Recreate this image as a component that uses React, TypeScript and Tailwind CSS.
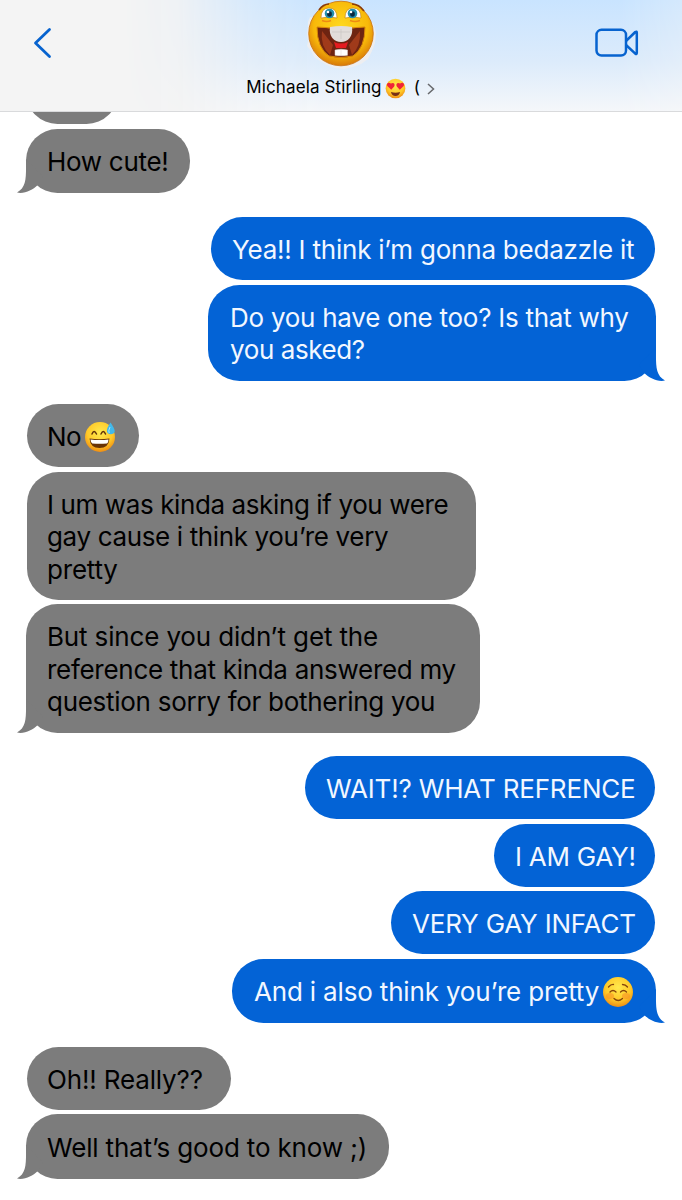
import type { ReactNode } from 'react'

type EmojiKind = 'sweat' | 'hearts' | 'relaxed'

interface Line {
  text: string
  spacing?: string
  emoji?: EmojiKind
}

interface Message {
  from: 'them' | 'me'
  box: string
  lines: Line[]
  tail?: boolean
}

const messages: Message[] = [
  { from: 'them', box: 'w-[164px] h-16 mt-[5px]', tail: true, lines: [{ text: 'How cute!', spacing: 'tracking-[-0.3px]' }] },
  { from: 'me', box: 'w-[444px] h-[63px] mt-6', lines: [{ text: 'Yea!! I think i’m gonna bedazzle it', spacing: 'tracking-[-0.22px]' }] },
  {
    from: 'me', box: 'w-[448px] h-24 mt-[5px]', tail: true,
    lines: [
      { text: 'Do you have one too? Is that why', spacing: 'tracking-[-0.26px]' },
      { text: 'you asked?', spacing: 'tracking-[-0.4px]' },
    ],
  },
  { from: 'them', box: 'w-[112px] h-[63px] mt-[23px]', lines: [{ text: 'No', spacing: 'tracking-[-0.5px]', emoji: 'sweat' }] },
  {
    from: 'them', box: 'w-[449px] h-32 mt-[5px]',
    lines: [
      { text: 'I um was kinda asking if you were', spacing: 'tracking-[-0.39px]' },
      { text: 'gay cause i think you’re very', spacing: 'tracking-[-0.36px]' },
      { text: 'pretty', spacing: 'tracking-[-0.2px]' },
    ],
  },
  {
    from: 'them', box: 'w-[454px] h-[129px] mt-1', tail: true,
    lines: [
      { text: 'But since you didn’t get the', spacing: 'tracking-[-0.15px]' },
      { text: 'reference that kinda answered my', spacing: 'tracking-[-0.29px]' },
      { text: 'question sorry for bothering you', spacing: 'tracking-[-0.28px]' },
    ],
  },
  { from: 'me', box: 'w-[350px] h-[63px] mt-[23px]', lines: [{ text: 'WAIT!? WHAT REFRENCE', spacing: 'tracking-[-0.17px]' }] },
  { from: 'me', box: 'w-[161px] h-[63px] mt-[5px]', lines: [{ text: 'I AM GAY!', spacing: 'tracking-[-0.25px]' }] },
  { from: 'me', box: 'w-[264px] h-[63px] mt-1', lines: [{ text: 'VERY GAY INFACT', spacing: 'tracking-[-0.2px]' }] },
  {
    from: 'me', box: 'w-[424px] h-16 mt-[5px]', tail: true,
    lines: [{ text: 'And i also think you’re pretty', spacing: 'tracking-[-0.17px]', emoji: 'relaxed' }],
  },
  { from: 'them', box: 'w-[204px] h-[63px] mt-6', lines: [{ text: 'Oh!! Really??', spacing: 'tracking-[-0.15px]' }] },
  { from: 'them', box: 'w-[363px] h-[65px] mt-1', tail: true, lines: [{ text: 'Well that’s good to know ;)', spacing: 'tracking-[-0.16px]' }] },
]

export default function App() {
  return (
    <div className="flex h-[1200px] w-[682px] flex-col overflow-hidden bg-white font-['Inter','Liberation_Sans',sans-serif]">
      <Header />
      <main className="flex flex-col">
        <div className="ml-[26px] h-3 w-[92px] overflow-hidden">
          <div className="-mt-[51px] h-[63px] rounded-full bg-[#7c7c7c]" />
        </div>
        {messages.map((m, i) => <Bubble key={i} message={m} />)}
      </main>
    </div>
  )
}

function Header() {
  return (
    <header className="relative h-28 shrink-0 border-b border-[#d9dadc] bg-[#f4f4f4]">
      <div className="absolute inset-0 bg-linear-to-b from-[#c9e4ff] via-[#dcebfb] via-55% to-[#f5f7fa] mask-[linear-gradient(to_right,transparent_18%,rgba(0,0,0,0.12)_26%,rgba(0,0,0,0.7)_37%,black_48%,black_91%,rgba(0,0,0,0.75)_100%)]" />
      <div className="relative flex h-full justify-between">
        <svg className="mt-[27px] ml-[33px] h-8 w-5" viewBox="0 0 20 32" fill="none" stroke="#0763cf" strokeWidth="2.8" strokeLinecap="round" strokeLinejoin="round">
          <path d="M16.5 2.5 2.5 16 16.5 29.5" />
        </svg>
        <div className="ml-[33px] flex flex-col items-center">
          <Avatar />
          <div className="mt-[6px] flex h-6 items-center text-[17px] whitespace-nowrap text-black">
            <span className="tracking-[0.14px]">Michaela Stirling</span>
            <Emoji kind="hearts" className="ml-[3px] size-[21px]" />
            <span className="ml-2">(</span>
            <svg className="mt-0.5 ml-[7px] h-3 w-2" viewBox="0 0 8 12" fill="none" stroke="#67696c" strokeWidth="1.5">
              <path d="m1 1 5.5 5L1 11" />
            </svg>
          </div>
        </div>
        <svg className="mt-[27px] mr-[43px] h-8 w-11" viewBox="0 0 44 32" fill="none" stroke="#0763cf" strokeWidth="2.5" strokeLinejoin="round">
          <rect x="1.5" y="2.8" width="29.5" height="25.8" rx="5" />
          <path d="m31 14 9.3-9q1.5-1 1.5.8v20q0 1.8-1.5.8L31 18" />
        </svg>
      </div>
    </header>
  )
}

function Bubble({ message }: { message: Message }) {
  const mine = message.from === 'me'
  const side = mine
    ? `self-end bg-[#0363d6] text-[#f2f7ff] ${message.tail ? 'mr-[26px] pl-[22px]' : 'mr-[27px] pl-[21px]'}`
    : `bg-[#7c7c7c] text-black ${message.tail ? 'ml-[26px] pl-[21px]' : 'ml-[27px] pl-5'}`

  return (
    <div className={`relative flex shrink-0 flex-col justify-center rounded-[31.5px] pt-[2.5px] ${side} ${message.box}`}>
      {message.lines.map(line => (
        <div key={line.text} className="flex h-[32.4px] items-center text-[26px] leading-[32px] whitespace-nowrap">
          <span className={line.spacing}>{line.text}</span>
          {line.emoji && <Emoji kind={line.emoji} className="ml-[3px] size-8" />}
        </div>
      ))}
      {message.tail && <Tail mine={mine} />}
    </div>
  )
}

function Tail({ mine }: { mine: boolean }) {
  return (
    <svg
      className={`absolute bottom-0 h-9 w-[30px] ${mine ? '-right-[9px] -scale-x-100 text-[#0363d6]' : '-left-[9px] text-[#7c7c7c]'}`}
      viewBox="0 0 30 36"
      fill="currentColor"
    >
      <path d="M9 2C9 20 10 30 0 35.6 8 37 15.500 33 20.500 28.300L26 20Z" />
    </svg>
  )
}

function Emoji({ kind, className }: { kind: EmojiKind; className: string }) {
  const faces: Record<EmojiKind, ReactNode> = {
    sweat: (
      <>
        <path d="M8 13q2-5 4.500 0M17 13q2.300-5 4.500 0" fill="none" stroke="#623209" strokeWidth="1.500" strokeLinecap="round" />
        <path d="M5.500 17.500q9.500 1.600 20 0-.8 9.500-10 9.500t-10-9.500Z" fill="#693406" />
        <path d="M6.500 18.400q9 1.400 18 0-.4 3.800-1.800 4-7.200.8-14.400 0-1.500-.5-1.800-4Z" fill="#fff" />
        <path d="M26.500 1.500q-4.200 6-3.500 9c.5 3.800 7.500 3.600 7.700-.3q0-2.600-4.200-8.700Z" fill="#42b9eb" />
        <path d="M26 6q-2 4-.8 6" fill="none" stroke="#a9e8ff" />
      </>
    ),
    hearts: (
      <>
        <path d="M9.500 18 3.500 12C1.500 8 5.500 5.500 9 8.500c4-2.500 7 .5 5 4.500ZM22.500 18l6-6c2-4-2-6.500-5.500-3.500-4-2.500-7 .5-5 4.500Z" fill="#f02438" />
        <path d="M9 21.500q7 2 14 0-1.500 6-7 6t-7-6Z" fill="#783015" />
      </>
    ),
    relaxed: (
      <>
        <ellipse cx="8" cy="20" rx="4" ry="3" fill="#f78a25" opacity=".5" />
        <ellipse cx="24" cy="20" rx="4" ry="3" fill="#f78a25" opacity=".5" />
        <path d="M6.500 11q2.500-2.800 5-2.500M20.500 8.500q3 0 5 2.500M8 16q3-3 6 0M18.500 16q3-3 6 0M12 22.500q4.200 4 8.500 0" fill="none" stroke="#86450b" strokeWidth="1.300" strokeLinecap="round" />
      </>
    ),
  }
  return (
    <svg className={`shrink-0 ${className}`} viewBox="0 0 32 32">
      <defs>
        <radialGradient id={`face-${kind}`} cx=".5" cy=".35" r=".65">
          <stop offset="0" stopColor="#ffe94e" />
          <stop offset=".65" stopColor="#ffc928" />
          <stop offset="1" stopColor="#ee8d13" />
        </radialGradient>
      </defs>
      <circle cx="16" cy="16" r="15" fill={`url(#face-${kind})`} />
      {faces[kind]}
    </svg>
  )
}

function Avatar() {
  return (
    <svg className="h-[70px] w-[72px]" viewBox="0 0 72 70">
      <defs>
        <radialGradient id="avatar" cx=".5" cy=".4" r=".6">
          <stop offset="0" stopColor="#ffd91e" />
          <stop offset=".7" stopColor="#f8b90a" />
          <stop offset="1" stopColor="#d87908" />
        </radialGradient>
      </defs>
      <path d="m5 17-2 5 0 5-1 7 1 7-1 5 4 5 3 6 6 4 7 4 8 3 9 1 9-2 8-3 7-5 4-8 3-8 1-10-3-10Z" fill="#f0eeee" opacity=".9" />
      <circle cx="36" cy="33.500" r="32.300" fill="url(#avatar)" stroke="#c96e0b" strokeWidth=".8" />
      <path d="M14 10q4-6 10-6M47 4q7 0 12 7" fill="none" stroke="#8d3d06" strokeWidth="1.700" />
      <path d="M16 18Q16 8 24 8t8 10q-8-2-16 0ZM40 18q0-10 8-10t8 10q-8-2-16 0Z" fill="#fff" stroke="#b97b13" strokeWidth=".6" />
      <ellipse cx="24.500" cy="13.500" rx="4.800" ry="4.800" fill="#238eac" />
      <ellipse cx="47.500" cy="13.500" rx="4.800" ry="4.800" fill="#238eac" />
      <ellipse cx="24.500" cy="14" rx="2.400" ry="2.800" fill="#082940" />
      <ellipse cx="47.500" cy="14" rx="2.400" ry="2.800" fill="#082940" />
      <circle cx="23" cy="12" r="1.300" fill="#fff" />
      <circle cx="46" cy="12" r="1.300" fill="#fff" />
      <path d="M17 20.500q5 2 9 0M45 20.500q5 2 10 0" fill="none" stroke="#ed8b13" strokeWidth="1.500" />
      <path d="M12 27q24 3 48 0 0 21-12 29-12 3-24 0Q12 48 12 27Z" fill="#6e2411" stroke="#d98708" strokeWidth="1" />
      <path d="m17 31 11 14-3 10Q15 46 17 31ZM55 31 44 45l3 10q9-9 8-24Z" fill="#a03a1a" />
      <path d="M29 42q7 3 14 0l-2 6H31Z" fill="#e51c20" />
      <path d="M25 27q11-2 22 0c1.500 9-4 15-11 15s-12.500-6-11-15Z" fill="#e2ddda" />
      <path d="M36 29v10M27 32h18" stroke="#c9c4c2" strokeWidth=".7" />
      <path d="M30 50q6-1.500 12.500 0v5.300q-6.500 1-12.500 0ZM36 50v5" fill="#fff" stroke="#ddd2cc" strokeWidth=".5" />
    </svg>
  )
}
